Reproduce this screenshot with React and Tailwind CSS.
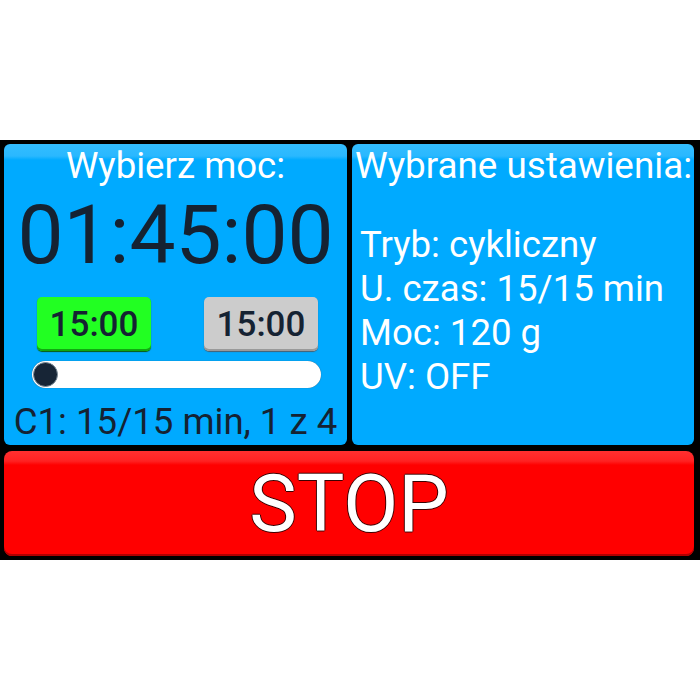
import React from "react";

const PANEL =
  "rounded-[6px] bg-[linear-gradient(to_bottom,#33bdff_0px,#2ab8ff_12px,#00aaff_16px,#00aaff_100%)]";

function TimeButton({ label, active }) {
  return (
    <div
      className={`flex h-[54px] w-[114px] items-center justify-center rounded-[5px] text-[35px] font-medium leading-none text-[#152232] ${
        active
          ? "bg-[#22ff22] shadow-[inset_0_-2px_0_#11a811,0_1px_1px_#0a5a0a]"
          : "bg-[#cccccc] shadow-[inset_0_-2px_0_#9a9a9a,0_1px_1px_#4a6070]"
      }`}
    >
      {label}
    </div>
  );
}

export default function App() {
  return (
    <div
      className="min-h-[700px] bg-white pt-[140px]"
      style={{ fontFamily: "Roboto, 'Noto Sans', sans-serif" }}
    >
      <div className="flex h-[420px] flex-col gap-[6px] bg-black pb-1 pl-1 pr-[6px] pt-1">
        <div className="flex h-[301px] gap-[5px]">
          {/* Left: power / timer */}
          <div className={`${PANEL} flex w-[343px] flex-col`}>
            <div className="h-[44px] text-center text-[36.6px] leading-[44px] text-white">
              Wybierz moc:
            </div>
            <div className="mt-[6px] h-[82px] text-center text-[82px] leading-[82px] text-[#152232]">
              01:45:00
            </div>
            <div className="mt-[21px] flex justify-between pl-[33px] pr-[29px]">
              <TimeButton label="15:00" active />
              <TimeButton label="15:00" />
            </div>
            <div className="ml-[28px] mt-[10px] flex h-[27px] w-[289px] items-center rounded-full bg-white pl-[1px] shadow-[0_0_1px_#3a5060]">
              <div className="h-[25px] w-[25px] rounded-full border border-[#7a8a96] bg-[#172536]" />
            </div>
            <div className="mt-[12px] h-[44px] whitespace-nowrap text-center text-[36.6px] leading-[44px] text-[#152232]">
              C1: 15/15 min, 1 z 4
            </div>
          </div>

          {/* Right: selected settings */}
          <div className={`${PANEL} flex flex-1 flex-col text-white`}>
            <div className="h-[44px] whitespace-nowrap pl-[3px] text-[36.8px] leading-[44px]">
              Wybrane ustawienia:
            </div>
            <div className="mt-[35px] flex flex-col whitespace-nowrap pl-[8px] text-[36.6px] leading-[44px]">
              <div>Tryb: cykliczny</div>
              <div>U. czas: 15/15 min</div>
              <div>Moc: 120 g</div>
              <div>UV: OFF</div>
            </div>
          </div>
        </div>

        {/* STOP */}
        <div className="flex h-[105px] items-center justify-center rounded-[8px] bg-[linear-gradient(to_bottom,#ff3030_0px,#ff2222_10px,#ff0000_14px,#ff0000_100%)] shadow-[inset_0_-2px_0_#b00000]">
          <span className="text-[80px] leading-none text-white [text-shadow:1px_0_0_#3a0000,-1px_0_0_#3a0000,0_1px_0_#3a0000,0_-1px_0_#3a0000]">
            STOP
          </span>
        </div>
      </div>
    </div>
  );
}
